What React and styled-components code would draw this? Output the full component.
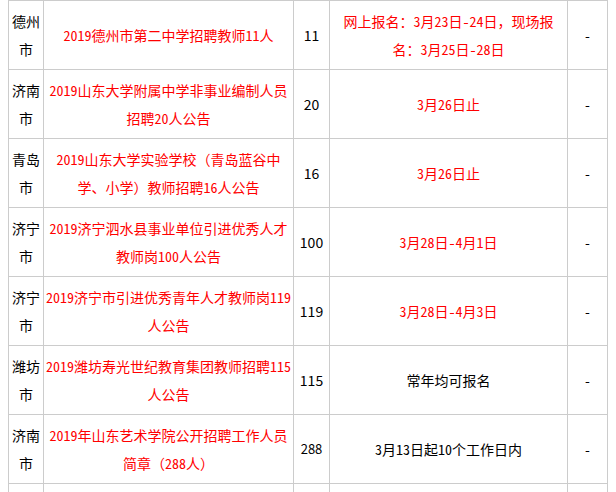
import React from 'react';
import styled, { createGlobalStyle } from 'styled-components';

const rows = [
  {
    city: ['德州', '市'],
    title: ['2019德州市第二中学招聘教师11人'],
    count: '11',
    date: ['网上报名：3月23日-24日，现场报', '名：3月25日-28日'],
    dateRed: true,
  },
  {
    city: ['济南', '市'],
    title: ['2019山东大学附属中学非事业编制人员', '招聘20人公告'],
    count: '20',
    date: ['3月26日止'],
    dateRed: true,
  },
  {
    city: ['青岛', '市'],
    title: ['2019山东大学实验学校（青岛蓝谷中', '学、小学）教师招聘16人公告'],
    count: '16',
    date: ['3月26日止'],
    dateRed: true,
  },
  {
    city: ['济宁', '市'],
    title: ['2019济宁泗水县事业单位引进优秀人才', '教师岗100人公告'],
    count: '100',
    date: ['3月28日-4月1日'],
    dateRed: true,
  },
  {
    city: ['济宁', '市'],
    title: ['2019济宁市引进优秀青年人才教师岗119', '人公告'],
    count: '119',
    date: ['3月28日-4月3日'],
    dateRed: true,
  },
  {
    city: ['潍坊', '市'],
    title: ['2019潍坊寿光世纪教育集团教师招聘115', '人公告'],
    count: '115',
    date: ['常年均可报名'],
    dateRed: false,
  },
  {
    city: ['济南', '市'],
    title: ['2019年山东艺术学院公开招聘工作人员', '简章（288人）'],
    count: '288',
    date: ['3月13日起10个工作日内'],
    dateRed: false,
  },
  {
    city: [],
    title: [],
    count: '',
    date: [],
    dateRed: false,
  },
];

// digits get half-width forms so they take the same room as in the original
const Text = ({ value }) =>
  value.split(/([0-9-]+)/).map((part, i) =>
    /^[0-9-]+$/.test(part) ? <Half key={i}>{part}</Half> : part
  );

const Lines = ({ lines }) => (
  <Inner>
    {lines.map((l, i) => (
      <React.Fragment key={i}>
        {i > 0 && <br />}
        <Text value={l} />
      </React.Fragment>
    ))}
  </Inner>
);

export default function App() {
  return (
    <>
      <GlobalStyle />
      <Grid>
        {rows.map((r, i) => (
          <React.Fragment key={i}>
            <Cell>
              <Lines lines={r.city} />
            </Cell>
            <Cell $red>
              <Lines lines={r.title} />
            </Cell>
            <Cell $small={r.count === '288'}>{r.count}</Cell>
            <Cell $red={r.dateRed}>
              <Lines lines={r.date} />
            </Cell>
            <Cell>{r.city.length ? '-' : ''}</Cell>
          </React.Fragment>
        ))}
      </Grid>
    </>
  );
}

const GlobalStyle = createGlobalStyle`
  html, body {
    margin: 0;
    background: #fff;
  }
  body {
    padding-left: 8px;
    font-family: "Noto Sans CJK SC", "Noto Sans", sans-serif;
    overflow: hidden;
  }
`;

const Grid = styled.div`
  display: grid;
  grid-template-columns: 34px 249px 35px 237px 39px;
  grid-auto-rows: 68px;
  gap: 1px;
  padding: 1px;
  background: #cccccc;
  width: max-content;
`;

const Cell = styled.div`
  background: #fff;
  display: flex;
  align-items: center;
  justify-content: center;
  text-align: center;
  font-size: ${(p) => (p.$small ? '13px' : '14px')};
  line-height: 28px;
  color: ${(p) => (p.$red ? '#ff0000' : '#000')};
  white-space: nowrap;
  overflow: hidden;
`;

const Inner = styled.div`
  text-align: center;
`;

const Half = styled.span`
  font-feature-settings: "hwid" 1;
`;
